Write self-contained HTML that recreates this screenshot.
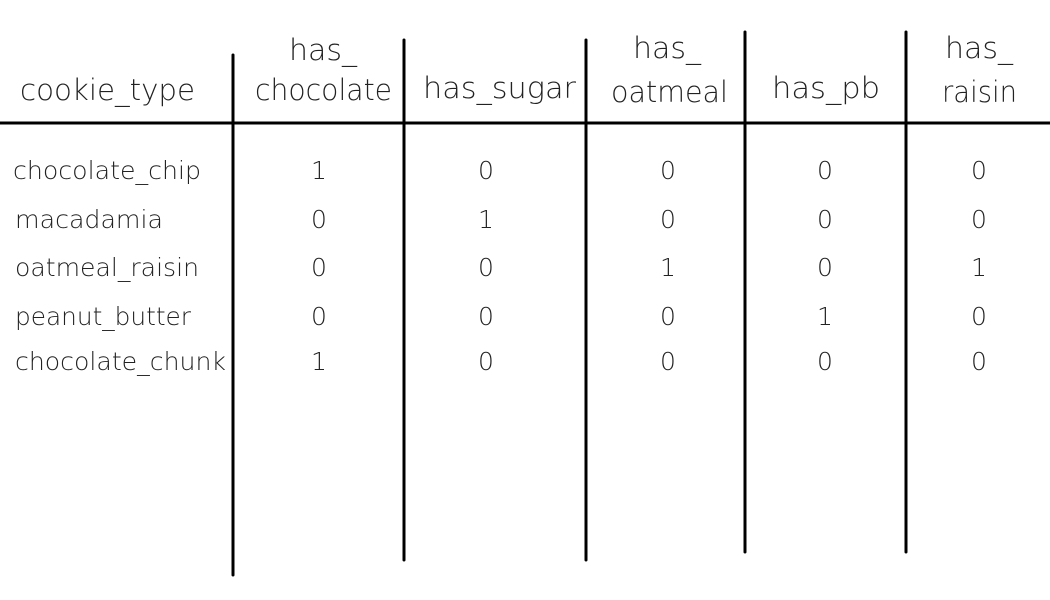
<!DOCTYPE html>
<html><head><meta charset="utf-8"><style>
html,body{margin:0;padding:0;background:#fff;width:1050px;height:600px;overflow:hidden}
svg text{font-family:"DejaVu Sans","Liberation Sans",sans-serif;font-weight:200;fill:#222}
</style></head><body>
<svg width="1050" height="600" xmlns="http://www.w3.org/2000/svg">
<g stroke="#000" stroke-width="3" stroke-linecap="round">
<line x1="0" y1="123" x2="1050" y2="123"/>
<line x1="233" y1="55" x2="233" y2="575"/>
<line x1="404" y1="40" x2="404" y2="560"/>
<line x1="586" y1="40" x2="586" y2="560"/>
<line x1="745" y1="32" x2="745" y2="552"/>
<line x1="906" y1="32" x2="906" y2="552"/>
</g>
<g font-size="29">
<text x="20" y="100" textLength="175" lengthAdjust="spacingAndGlyphs">cookie_type</text>
<text x="289" y="60" textLength="68" lengthAdjust="spacingAndGlyphs">has_</text>
<text x="255" y="100" textLength="137" lengthAdjust="spacingAndGlyphs">chocolate</text>
<text x="423" y="98" textLength="153" lengthAdjust="spacingAndGlyphs">has_sugar</text>
<text x="633" y="58" textLength="68" lengthAdjust="spacingAndGlyphs">has_</text>
<text x="611" y="102" textLength="117" lengthAdjust="spacingAndGlyphs">oatmeal</text>
<text x="772" y="98" textLength="108" lengthAdjust="spacingAndGlyphs">has_pb</text>
<text x="945" y="58" textLength="68" lengthAdjust="spacingAndGlyphs">has_</text>
<text x="942" y="102" textLength="75" lengthAdjust="spacingAndGlyphs">raisin</text>
</g>
<g font-size="25">
<text x="13" y="179" textLength="188" lengthAdjust="spacingAndGlyphs">chocolate_chip</text>
<text x="15" y="228" textLength="148" lengthAdjust="spacingAndGlyphs">macadamia</text>
<text x="15" y="276" textLength="184" lengthAdjust="spacingAndGlyphs">oatmeal_raisin</text>
<text x="15" y="325" textLength="176" lengthAdjust="spacingAndGlyphs">peanut_butter</text>
<text x="15" y="370" textLength="211" lengthAdjust="spacingAndGlyphs">chocolate_chunk</text>
</g>
<g font-size="25" text-anchor="middle">
<text x="319" y="179">1</text><text x="486" y="179">0</text><text x="668" y="179">0</text><text x="825" y="179">0</text><text x="979" y="179">0</text>
<text x="319" y="228">0</text><text x="486" y="228">1</text><text x="668" y="228">0</text><text x="825" y="228">0</text><text x="979" y="228">0</text>
<text x="319" y="276">0</text><text x="486" y="276">0</text><text x="668" y="276">1</text><text x="825" y="276">0</text><text x="979" y="276">1</text>
<text x="319" y="325">0</text><text x="486" y="325">0</text><text x="668" y="325">0</text><text x="825" y="325">1</text><text x="979" y="325">0</text>
<text x="319" y="370">1</text><text x="486" y="370">0</text><text x="668" y="370">0</text><text x="825" y="370">0</text><text x="979" y="370">0</text>
</g>
</svg>
</body></html>
